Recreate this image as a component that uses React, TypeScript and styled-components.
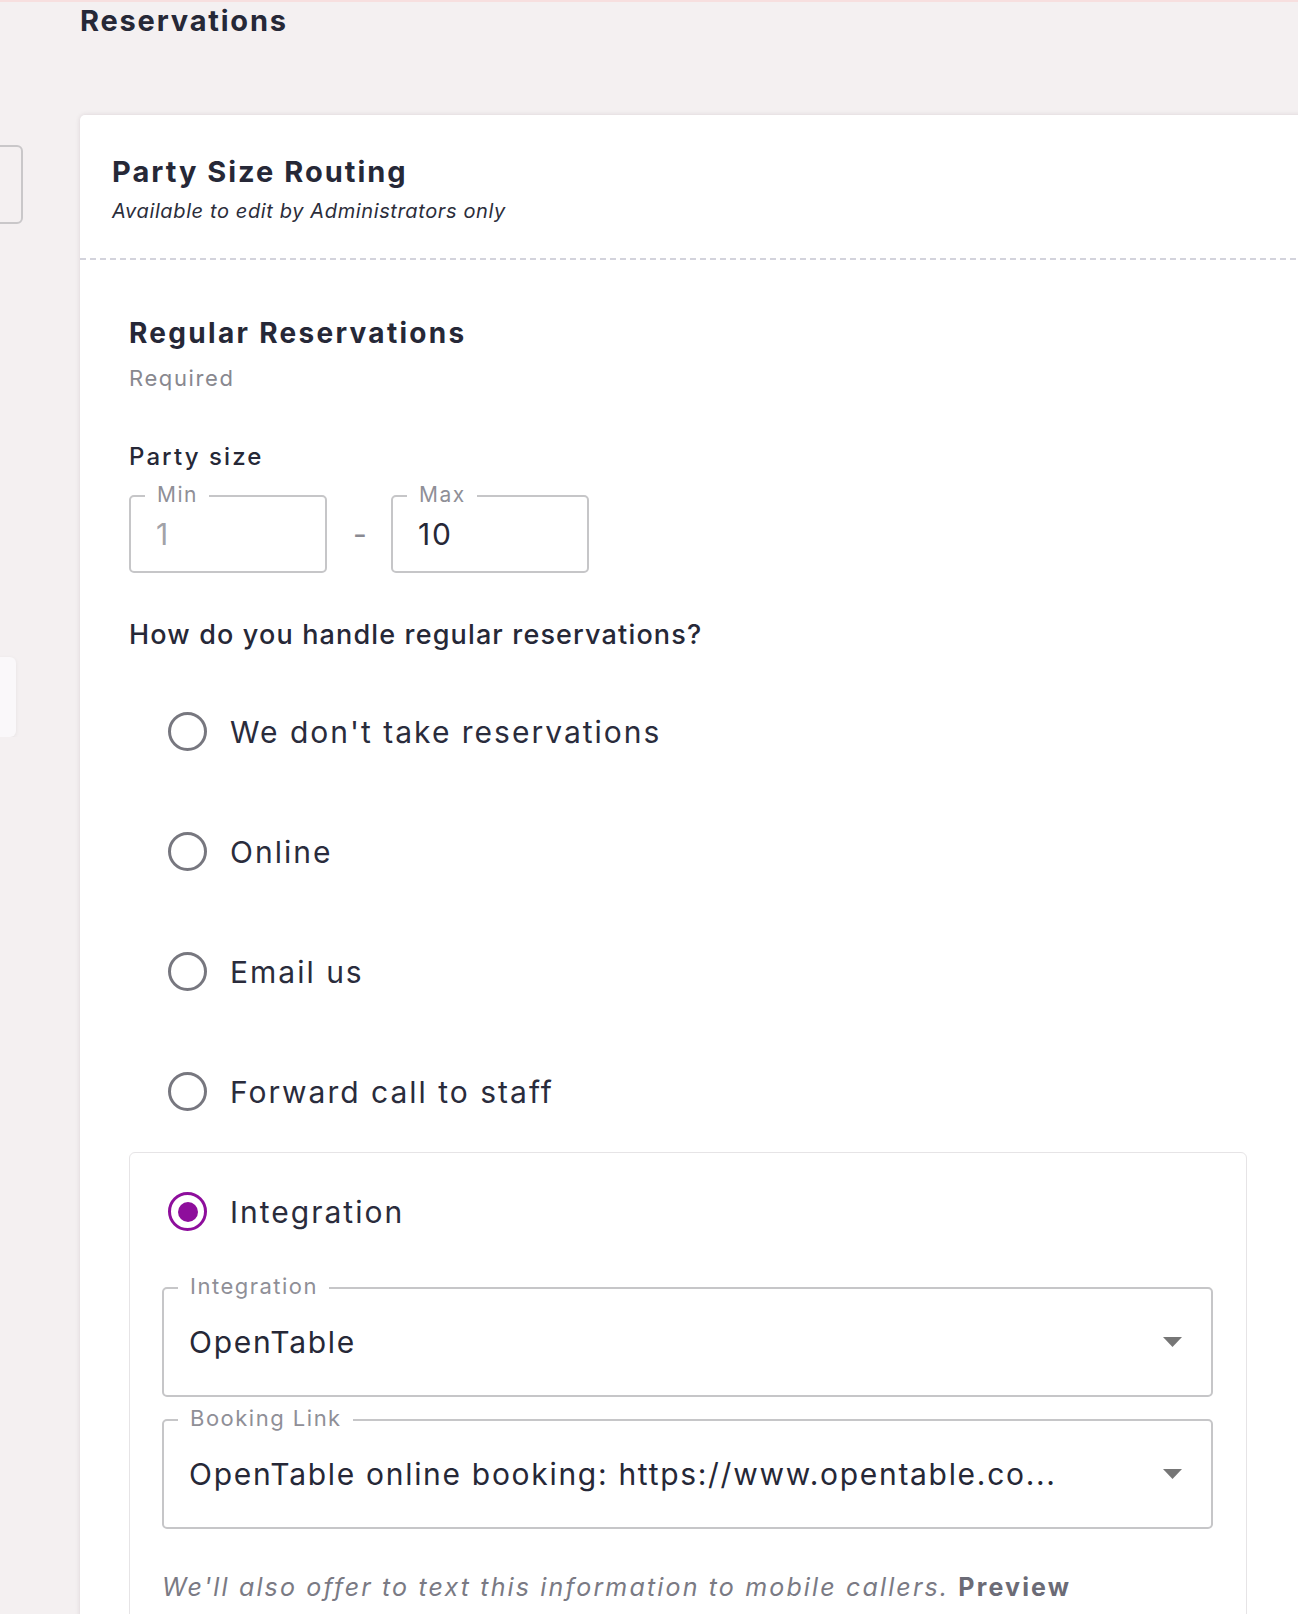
import React from "react";
import styled, { createGlobalStyle } from "styled-components";

const GlobalStyle = createGlobalStyle`
  html, body {
    margin: 0;
    padding: 0;
    background: #f4f0f1;
    overflow: hidden;
  }
  body {
    font-family: Inter, "Noto Sans", sans-serif;
    color: #262837;
  }
  * { box-sizing: border-box; }
`;

const Page = styled.div`
  border-top: 2px solid #f7dfdf;
  display: flex;
  align-items: flex-start;
  min-height: 1614px;
`;

const Sidebar = styled.aside`
  width: 23px;
  flex: none;
  overflow: hidden;
  padding-top: 143px;
  display: flex;
  flex-direction: column;
  align-items: flex-end;
`;

const SideCard = styled.div<{ $variant: "outlined" | "soft" }>`
  flex: none;
  width: 200px;
  border-radius: 6px;
  ${(p) =>
    p.$variant === "outlined"
      ? `height: 79px; border: 2px solid #c9c7c9; background: transparent;`
      : `height: 80px; margin-top: 433px; margin-right: 7px; background: #faf8fa; box-shadow: 0 1px 4px rgba(0,0,0,0.06);`}
`;

const Main = styled.main`
  margin-left: 57px;
  width: 1240px;
  flex: none;
`;

const PageTitle = styled.h1`
  margin: 2px 0 0;
  font-size: 29px;
  line-height: 1.2;
  font-weight: 700;
  letter-spacing: 1.8px;
  color: #262837;
`;

const Card = styled.section`
  margin-top: 76px;
  background: #fff;
  border-radius: 5px;
  box-shadow: 0 0 5px rgba(40, 20, 30, 0.12);
`;

const CardHeader = styled.header`
  padding: 40px 32px 37px;
  background-image: linear-gradient(to right, #d3d3dc 6px, transparent 6px);
  background-size: 10px 2px;
  background-repeat: repeat-x;
  background-position: left bottom;
`;

const CardTitle = styled.h2`
  margin: 0;
  font-size: 29px;
  line-height: 1.2;
  font-weight: 700;
  letter-spacing: 2px;
  color: #262837;
`;

const CardSubtitle = styled.p`
  margin: 9px 0 0;
  font-size: 20px;
  line-height: 1.2;
  font-style: italic;
  color: #2b2d3a;
  letter-spacing: 0.62px;
`;

const CardBody = styled.div`
  padding: 57px 73px 0 49px;
`;

const SectionTitle = styled.h3`
  margin: 0;
  font-size: 28px;
  line-height: 1.2;
  font-weight: 700;
  letter-spacing: 2.3px;
  color: #262837;
`;

const Hint = styled.div`
  margin-top: 15px;
  font-size: 22px;
  line-height: 1.2;
  letter-spacing: 1.6px;
  color: #88888f;
`;

const FieldHeading = styled.div<{ $gap: number; $size: number; $spacing: number }>`
  margin-top: ${(p) => p.$gap}px;
  font-size: ${(p) => p.$size}px;
  line-height: 1.2;
  font-weight: 500;
  letter-spacing: ${(p) => p.$spacing}px;
  color: #262837;
`;

const RangeRow = styled.div`
  margin-top: 24px;
  display: flex;
  align-items: center;
  gap: 26px;
`;

const Dash = styled.span`
  width: 11px;
  margin-right: 1px;
  font-size: 30px;
  line-height: 1;
  color: #8a8a92;
  text-align: center;
`;

const Outlined = styled.div<{ $width?: number; $height: number }>`
  position: relative;
  width: ${(p) => (p.$width ? `${p.$width}px` : "auto")};
  height: ${(p) => p.$height}px;
  border: 2px solid #c6c6c8;
  border-radius: 5px;
  display: flex;
  align-items: center;
  padding: 0 29px 0 25px;
`;

const FloatLabel = styled.span<{ $size: number; $top: number }>`
  position: absolute;
  top: ${(p) => p.$top}px;
  left: 14px;
  padding: 0 11px 0 12px;
  background: #fff;
  font-size: ${(p) => p.$size}px;
  line-height: 24px;
  letter-spacing: 1.5px;
  color: #8f8f97;
  white-space: nowrap;
`;

const Value = styled.span<{ $muted?: boolean }>`
  flex: 1;
  font-size: 30px;
  line-height: 1.2;
  letter-spacing: 1.7px;
  color: ${(p) => (p.$muted ? "#a2a2a8" : "#262837")};
  white-space: nowrap;
  overflow: hidden;
`;

const RadioList = styled.div`
  margin-top: 20px;
  display: flex;
  flex-direction: column;
`;

const RadioRow = styled.label`
  height: 120px;
  display: flex;
  align-items: center;
  gap: 23px;
  padding-left: 39px;
  font-size: 30px;
  line-height: 1.2;
  letter-spacing: 2px;
  color: #2a2c3c;
  cursor: pointer;
`;

const RadioCircle = styled.span<{ $checked?: boolean }>`
  width: 39px;
  height: 39px;
  flex: none;
  border-radius: 50%;
  border: 3px solid ${(p) => (p.$checked ? "#8e0e9c" : "#77777f")};
  display: flex;
  align-items: center;
  justify-content: center;
  &::after {
    content: "";
    display: ${(p) => (p.$checked ? "block" : "none")};
    width: 20px;
    height: 20px;
    border-radius: 50%;
    background: #8e0e9c;
  }
`;

const OptionPanel = styled.div`
  border: 1px solid #e6e4e6;
  border-radius: 6px;
  padding: 0 33px 40px 32px;
`;

const PanelRadioRow = styled(RadioRow)`
  height: 118px;
  padding-left: 6px;
`;

const SelectStack = styled.div`
  margin-top: 16px;
  display: flex;
  flex-direction: column;
  gap: 22px;
`;

const Footnote = styled.p`
  margin: 43px 0 0;
  font-size: 25px;
  line-height: 1.2;
  font-style: italic;
  color: #7a7a84;
  letter-spacing: 2.15px;
  white-space: nowrap;
`;

const FootLink = styled.span`
  font-style: normal;
  font-weight: 700;
  color: #6b6b76;
`;

const Caret = () => (
  <svg width="19" height="10" viewBox="0 0 19 10" aria-hidden>
    <polygon points="0,0 19,0 9.5,10" fill="#767676" />
  </svg>
);

const options = [
  "We don't take reservations",
  "Online",
  "Email us",
  "Forward call to staff",
];

export default function App() {
  return (
    <>
      <GlobalStyle />
      <Page>
        <Sidebar>
          <SideCard $variant="outlined" />
          <SideCard $variant="soft" />
        </Sidebar>
        <Main>
          <PageTitle>Reservations</PageTitle>
          <Card>
            <CardHeader>
              <CardTitle>Party Size Routing</CardTitle>
              <CardSubtitle>Available to edit by Administrators only</CardSubtitle>
            </CardHeader>
            <CardBody>
              <SectionTitle>Regular Reservations</SectionTitle>
              <Hint>Required</Hint>
              <FieldHeading $gap={51} $size={24} $spacing={2.1}>Party size</FieldHeading>
              <RangeRow>
                <Outlined $width={198} $height={78}>
                  <FloatLabel $size={21} $top={-14}>Min</FloatLabel>
                  <Value $muted>1</Value>
                </Outlined>
                <Dash>-</Dash>
                <Outlined $width={198} $height={78}>
                  <FloatLabel $size={21} $top={-14}>Max</FloatLabel>
                  <Value>10</Value>
                </Outlined>
              </RangeRow>
              <FieldHeading $gap={46} $size={27} $spacing={1.15}>
                How do you handle regular reservations?
              </FieldHeading>
              <RadioList>
                {options.map((o) => (
                  <RadioRow key={o}>
                    <RadioCircle />
                    {o}
                  </RadioRow>
                ))}
                <OptionPanel>
                  <PanelRadioRow>
                    <RadioCircle $checked />
                    Integration
                  </PanelRadioRow>
                  <SelectStack>
                    <Outlined $height={110}>
                      <FloatLabel $size={22} $top={-15}>Integration</FloatLabel>
                      <Value>OpenTable</Value>
                      <Caret />
                    </Outlined>
                    <Outlined $height={110}>
                      <FloatLabel $size={22} $top={-15}>Booking Link</FloatLabel>
                      <Value>OpenTable online booking: https://www.opentable.co...</Value>
                      <Caret />
                    </Outlined>
                  </SelectStack>
                  <Footnote>
                    We'll also offer to text this information to mobile callers.{" "}
                    <FootLink>Preview</FootLink>
                  </Footnote>
                </OptionPanel>
              </RadioList>
            </CardBody>
          </Card>
        </Main>
      </Page>
    </>
  );
}
